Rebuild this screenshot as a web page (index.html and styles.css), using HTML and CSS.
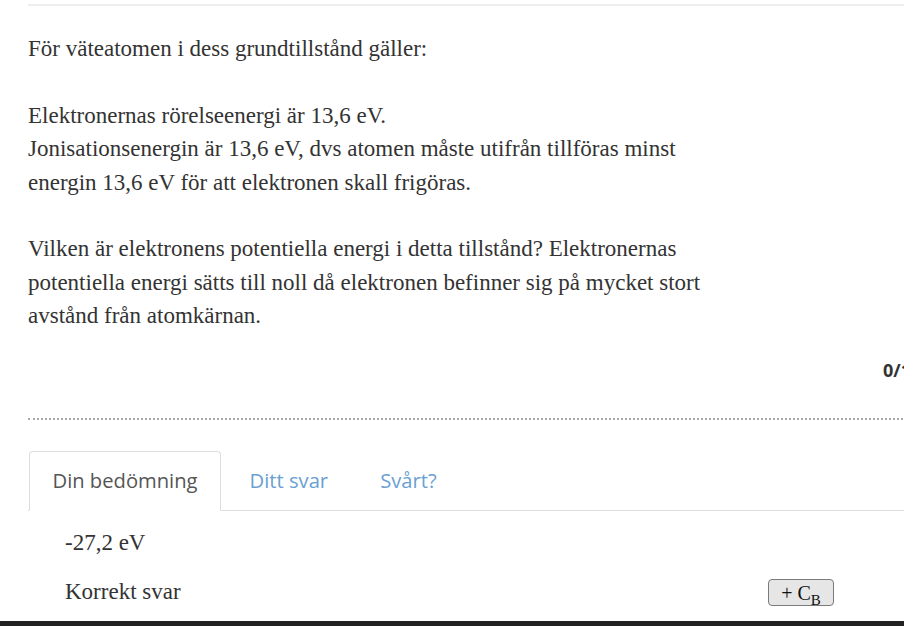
FILE: index.html
```html
<!DOCTYPE html>
<html lang="sv">
<head>
<meta charset="utf-8">
<title>Fråga</title>
<link rel="stylesheet" href="styles.css">
</head>
<body>
<div class="page">
  <div class="topline"></div>
  <div class="question">
    För väteatomen i dess grundtillstånd gäller:<br><br>
    Elektronernas rörelseenergi är 13,6 eV.<br>
    Jonisationsenergin är 13,6 eV, dvs atomen måste utifrån tillföras minst energin 13,6 eV för att elektronen skall frigöras.<br><br>
    Vilken är elektronens potentiella energi i detta tillstånd? Elektronernas potentiella energi sätts till noll då elektronen befinner sig på mycket stort avstånd från atomkärnan.
  </div>
  <div class="score">0/1</div>
  <div class="divider"></div>
  <ul class="tabs">
    <li class="tab active"><a>Din bedömning</a></li>
    <li class="tab"><a>Ditt svar</a></li>
    <li class="tab"><a>Svårt?</a></li>
  </ul>
  <div class="feedback">
    <div class="answer">-27,2 eV</div>
    <div class="result-row">
      <span class="result">Korrekt svar</span>
      <button class="cb">+ C<sub>B</sub></button>
    </div>
  </div>
</div>
<div class="footer"></div>
</body>
</html>
```
FILE: styles.css
```css
html, body {
  margin: 0;
  padding: 0;
  overflow: hidden;
  background: #fff;
}
body {
  width: 904px;
  height: 626px;
  position: relative;
}
.page {
  margin-left: 28px;
  width: 883px;
  color: #333;
}
.topline {
  margin-top: 4px;
  border-top: 2px solid #eeeeee;
}
.question {
  width: 682px;
  padding-top: 26px;
  font-family: "Liberation Serif", "Times New Roman", serif;
  font-size: 23px;
  line-height: 33.4px;
  color: #333;
}
.score {
  margin-top: 24px;
  text-align: right;
  font-family: "Open Sans", sans-serif;
  font-weight: 700;
  font-size: 18px;
  line-height: 26px;
  color: #333;
}
.divider {
  margin-top: 35px;
  border-top: 2px dotted #a8a8a8;
}
.tabs {
  list-style: none;
  margin: 31px 0 0;
  padding: 0 0 0 1px;
  display: flex;
  border-bottom: 1px solid #dddddd;
  height: 59px;
}
.tab {
  margin-right: 5px;
  margin-bottom: -1px;
}
.tab a {
  display: block;
  height: 58px;
  line-height: 56px;
  padding: 0 22.5px;
  border: 1px solid transparent;
  border-radius: 4px 4px 0 0;
  font-family: "Open Sans", sans-serif;
  font-size: 20.2px;
  color: #6a9fd2;
}
.tab.active a {
  color: #555;
  border-color: #dddddd;
  border-bottom-color: #fff;
  background: #fff;
}
.feedback {
  padding: 17px 77px 0 37px;
  font-family: "Liberation Serif", "Times New Roman", serif;
  font-size: 23px;
  color: #333;
}
.answer {
  line-height: 30px;
}
.result-row {
  margin-top: 19px;
  height: 30px;
  display: flex;
  align-items: center;
  justify-content: space-between;
}
.result {
  line-height: 30px;
}
.cb {
  width: 66px;
  height: 27px;
  margin-top: 2px;
  padding: 0;
  border: 1px solid #7a7a7a;
  border-radius: 4px;
  background: #e6e6e6;
  font-family: "Liberation Serif", "Times New Roman", serif;
  font-size: 20px;
  color: #111;
  line-height: 20px;
}
.cb sub {
  font-size: 15px;
  line-height: 0;
}
.footer {
  position: absolute;
  left: 0;
  right: 0;
  bottom: 0;
  height: 5px;
  background: #222;
}
```
